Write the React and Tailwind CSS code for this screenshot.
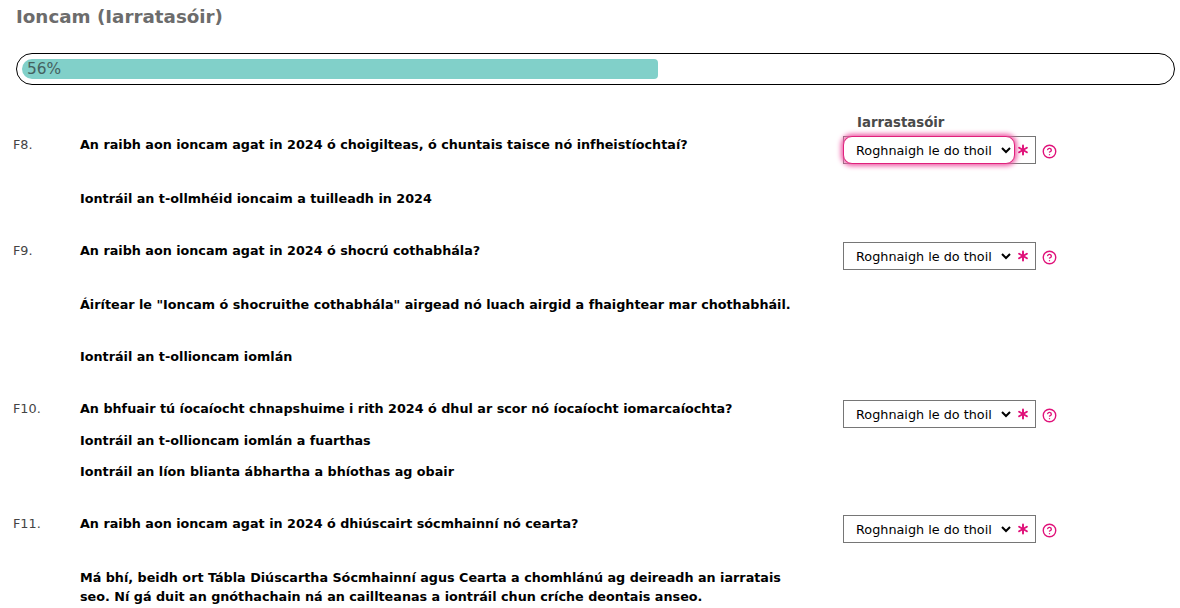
import React from "react";
import { Asterisk, CircleHelp } from "lucide-react";

function Sel({ focus }) {
  return (
    <div className="flex items-center shrink-0">
      <div className="flex items-center w-[193px] h-[28px] border border-[#767676]">
        <select
          className={
            "h-[28px] text-[12.8px] text-black shrink-0 outline-none " +
            (focus
              ? "w-[172px] pl-[8px] -ml-px bg-white rounded-[9px] border border-[#e0217c] shadow-[0_0_5px_2px_#ee5aa5]"
              : "w-[170px] pl-[8px] border-0 bg-transparent")
          }
        >
          <option>Roghnaigh le do thoil</option>
        </select>
        <Asterisk size={18} strokeWidth={2.6} className={"text-[#e0127a] shrink-0 " + (focus ? "-ml-[1px]" : "ml-[0px]")} />
      </div>
      <CircleHelp size={15} strokeWidth={2.2} className="text-[#e0127a] ml-[6px] mt-[2px]" />
    </div>
  );
}

function Row({ num, children, focus }) {
  return (
    <div className="flex items-start">
      <div className="w-[80px] pl-[13px] pt-[1px] shrink-0 text-[#444] text-[12.8px] leading-[16px]">{num}</div>
      <div className="w-[763px] shrink-0 font-bold text-[12.75px] text-black leading-[20px] -mt-[1px]">{children}</div>
      <Sel focus={focus} />
    </div>
  );
}

export default function App() {
  return (
    <div className="w-[1180px] h-[608px] overflow-hidden bg-white font-['DejaVu_Sans','Verdana',sans-serif] flex flex-col">
      <h1 className="ml-[16px] mt-[6px] text-[18.3px] leading-[22px] font-bold text-[#6c6c6c]">Ioncam (Iarratasóir)</h1>
      <div className="mx-[16px] mt-[25px] w-[1159px] h-[32px] border border-black rounded-[16px] p-[5px] shrink-0">
        <div className="w-[636px] h-[20px] bg-[#81d0c9] rounded-[4px] rounded-l-[10px] text-[15.4px] leading-[20px] text-[#45615f] pl-[5px]">56%</div>
      </div>
      <div className="ml-[857px] mt-[30px] text-[13.3px] leading-[16px] font-bold text-[#4a4a4a]">Iarrastasóir</div>
      <div className="mt-[5px] flex flex-col gap-[33px]">
        <Row num="F8." focus>
          <div>An raibh aon ioncam agat in 2024 ó choigilteas, ó chuntais taisce nó infheistíochtaí?</div>
          <div className="mt-[34px]">Iontráil an t-ollmhéid ioncaim a tuilleadh in 2024</div>
        </Row>
        <Row num="F9.">
          <div>An raibh aon ioncam agat in 2024 ó shocrú cothabhála?</div>
          <div className="mt-[34px]">Áirítear le "Ioncam ó shocruithe cothabhála" airgead nó luach airgid a fhaightear mar chothabháil.</div>
          <div className="mt-[32px]">Iontráil an t-ollioncam iomlán</div>
        </Row>
        <Row num="F10.">
          <div>An bhfuair tú íocaíocht chnapshuime i rith 2024 ó dhul ar scor nó íocaíocht iomarcaíochta?</div>
          <div className="mt-[12px]">Iontráil an t-ollioncam iomlán a fuarthas</div>
          <div className="mt-[11px]">Iontráil an líon blianta ábhartha a bhíothas ag obair</div>
        </Row>
        <Row num="F11.">
          <div>An raibh aon ioncam agat in 2024 ó dhiúscairt sócmhainní nó cearta?</div>
          <div className="mt-[34px] w-[720px] leading-[19px]">Má bhí, beidh ort Tábla Diúscartha Sócmhainní agus Cearta a chomhlánú ag deireadh an iarratais seo. Ní gá duit an gnóthachain ná an caillteanas a iontráil chun críche deontais anseo.</div>
        </Row>
      </div>
    </div>
  );
}
